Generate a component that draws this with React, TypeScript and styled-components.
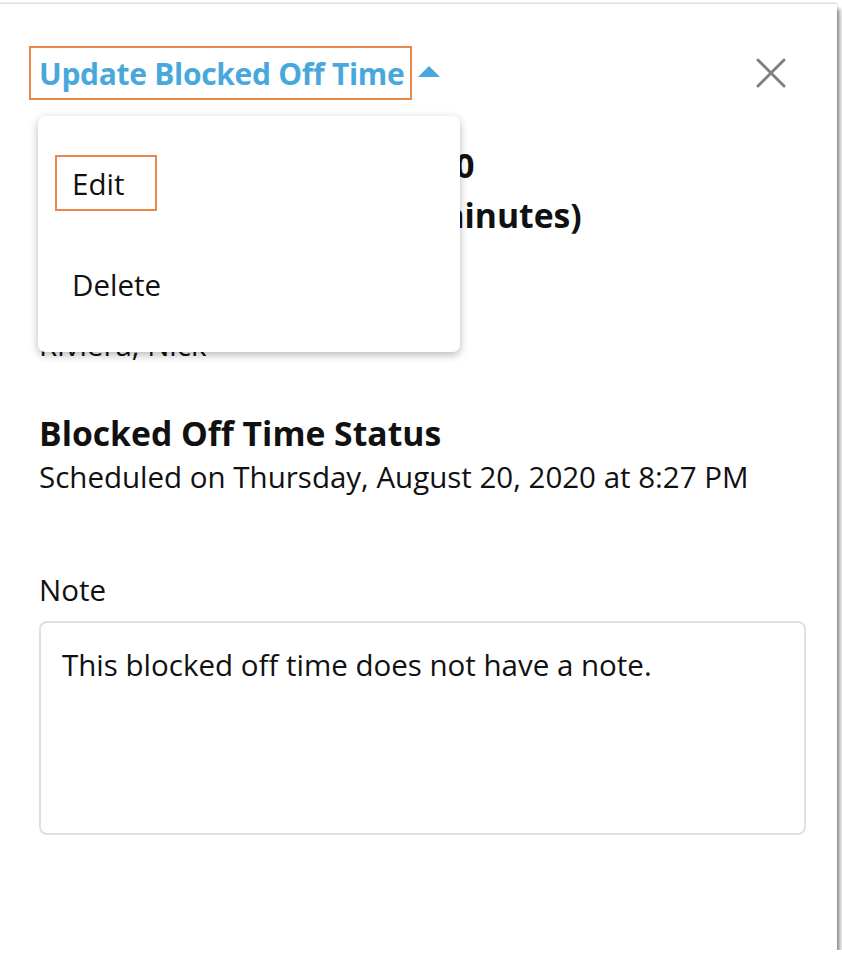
import React from "react";
import styled, { createGlobalStyle } from "styled-components";

const GlobalStyle = createGlobalStyle`
  html, body {
    margin: 0;
    padding: 0;
    background: #ffffff;
  }
  body {
    font-family: "Open Sans", "Noto Sans", sans-serif;
    color: #111111;
  }
`;

const Panel = styled.div`
  position: relative;
  width: 837px;
  height: 946px;
  margin-top: 4px;
  background: #ffffff;
  box-shadow: 3px 5px 4px rgba(0, 0, 0, 0.42), 0 -1px 2px rgba(0, 0, 0, 0.18);
  display: flex;
  flex-direction: column;
  padding: 42px 0 0 0;
  box-sizing: border-box;
`;

const Header = styled.div`
  position: relative;
  display: flex;
  align-items: center;
  justify-content: space-between;
  padding: 0 50px 0 29px;
  height: 54px;
`;

const TitleGroup = styled.div`
  display: flex;
  align-items: center;
  gap: 6px;
`;

const TitleBox = styled.div`
  border: 2px solid #e8874a;
  height: 54px;
  box-sizing: border-box;
  display: flex;
  align-items: center;
  padding: 0 6px 0 8px;
  color: #48a8dc;
  font-weight: 700;
  font-size: 30px;
  letter-spacing: -0.3px;
`;

const Caret = styled.span`
  width: 0;
  height: 0;
  border-left: 11px solid transparent;
  border-right: 11px solid transparent;
  border-bottom: 11px solid #48a8dc;
  margin-top: -4px;
`;

const CloseButton = styled.button`
  border: none;
  background: transparent;
  padding: 0;
  width: 32px;
  height: 32px;
  display: flex;
  align-items: center;
  justify-content: center;
  cursor: pointer;
`;

const Menu = styled.div`
  position: absolute;
  left: 38px;
  top: 70px;
  width: 422px;
  height: 236px;
  background: #ffffff;
  border-radius: 7px;
  box-shadow: 0 3px 9px rgba(0, 0, 0, 0.28);
  z-index: 2;
  display: flex;
  flex-direction: column;
  padding-top: 39px;
  box-sizing: border-box;
`;

const MenuItem = styled.div<{ $focused?: boolean }>`
  align-self: flex-start;
  margin-left: 17px;
  height: 56px;
  display: flex;
  align-items: center;
  padding: 0 0 0 15px;
  width: ${(p) => (p.$focused ? "102px" : "auto")};
  box-sizing: border-box;
  border: 2px solid ${(p) => (p.$focused ? "#e8874a" : "transparent")};
  font-size: 29.5px;
  color: #111111;
  & + & {
    margin-top: 45px;
  }
`;

const Content = styled.div`
  display: flex;
  flex-direction: column;
  padding: 0 31px 0 39px;
  margin-top: 43px;
`;

const Line = styled.div<{ $bold?: boolean; $gap?: number }>`
  font-size: ${(p) => (p.$bold ? "33.7px" : "29.5px")};
  font-weight: ${(p) => (p.$bold ? 700 : 400)};
  line-height: 44px;
  margin-top: ${(p) => p.$gap ?? 0}px;
  white-space: nowrap;
`;

const NoteBox = styled.div`
  margin-top: 9px;
  height: 214px;
  box-sizing: border-box;
  border: 2px solid #e0e0e0;
  border-radius: 8px;
  padding: 20px 21px;
  font-size: 29.5px;
  line-height: 44px;
`;

export default function App() {
  return (
    <>
      <GlobalStyle />
      <Panel>
        <Header>
          <TitleGroup>
            <TitleBox>Update Blocked Off Time</TitleBox>
            <Caret />
          </TitleGroup>
          <CloseButton aria-label="Close">
            <svg width="30" height="30" viewBox="0 0 30 30">
              <path
                d="M2 2 L28 28 M28 2 L2 28"
                stroke="#808080"
                strokeWidth="3"
                strokeLinecap="round"
              />
            </svg>
          </CloseButton>
          <Menu>
            <MenuItem $focused>Edit</MenuItem>
            <MenuItem>Delete</MenuItem>
          </Menu>
        </Header>
        <Content>
          <Line $bold>Thursday, August 20, 2020</Line>
          <Line $bold $gap={6}>12:00 PM - 12:30 PM (30 minutes)</Line>
          <Line $bold $gap={42}>Provider</Line>
          <Line>Riviera, Nick</Line>
          <Line $bold $gap={44}>Blocked Off Time Status</Line>
          <Line>Scheduled on Thursday, August 20, 2020 at 8:27 PM</Line>
          <Line $gap={69}>Note</Line>
          <NoteBox>This blocked off time does not have a note.</NoteBox>
        </Content>
      </Panel>
    </>
  );
}
